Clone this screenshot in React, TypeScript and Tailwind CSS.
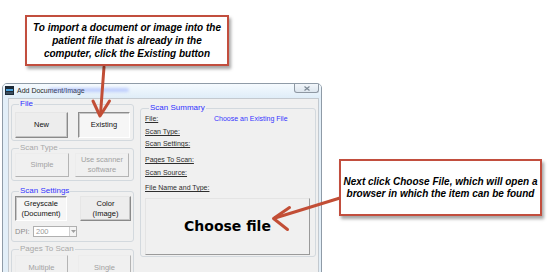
import React from "react";

function Btn({ cls, children, variant = "normal" }: { cls: string; children: React.ReactNode; variant?: "normal" | "pressed" | "disabled" }) {
  const v =
    variant === "pressed"
      ? "border border-t-[#8c8c8c] border-l-[#8c8c8c] border-r-[#ffffff] border-b-[#ffffff] bg-[#f6f6f6] text-[#111111] shadow-[inset_1px_1px_0_#c8c8c8]"
      : variant === "disabled"
      ? "border border-t-[#ececec] border-l-[#ececec] border-r-[#b4b4b4] border-b-[#b4b4b4] bg-[#f0f0f0] text-[#a2a2a2]"
      : "border border-t-[#e6e6e6] border-l-[#e6e6e6] border-r-[#8a8a8a] border-b-[#8a8a8a] bg-[#ededed] text-[#111111] shadow-[inset_-1px_-1px_0_#c4c4c4]";
  return (
    <div className={`${cls} ${v} flex items-center justify-center text-center text-[7.5px] leading-[10px]`}>
      {children}
    </div>
  );
}

function Group({ legend, color, cls, children }: { legend: string; color: string; cls: string; children: React.ReactNode }) {
  return (
    <fieldset className={`${cls} border border-[#d3d9de] rounded-[3px] min-w-0`}>
      <legend className={`ml-[4px] px-[1px] text-[8px] leading-[8px] ${color}`}>{legend}</legend>
      {children}
    </fieldset>
  );
}

export default function App() {
  const labels = [
    { t: "File:", mt: "mt-[2px]" },
    { t: "Scan Type:", mt: "mt-[4px]" },
    { t: "Scan Settings:", mt: "mt-[3px]" },
    { t: "Pages To Scan:", mt: "mt-[7px]" },
    { t: "Scan Source:", mt: "mt-[4px]" },
    { t: "File Name and Type:", mt: "mt-[6px]" },
  ];
  return (
    <div className="relative w-[556px] h-[272px] overflow-hidden bg-white font-['Liberation_Sans',Arial,sans-serif]">
      {/* Dialog window */}
      <div className="ml-[2px] mt-[83px] w-[320px] h-[200px] flex flex-col border border-[#8f9ba7] rounded-t-[5px] bg-[#e3eff8]">
        {/* title bar */}
        <div className="relative h-[14px] shrink-0 flex items-start bg-gradient-to-b from-[#f5fafe] to-[#dfedf8] rounded-t-[4px]">
          <svg className="ml-[2px] mt-[2px] shrink-0" width="9" height="9" viewBox="0 0 9 9">
            <rect x="0" y="0" width="9" height="9" fill="#1d2a36" />
            <rect x="1" y="3" width="7" height="2" fill="#4aa3e0" />
            <rect x="1" y="6" width="7" height="2" fill="#3a4d5e" />
          </svg>
          <span className="ml-[3px] mt-[3px] text-[7px] leading-[8px] text-[#1e1e1e] whitespace-nowrap">Add Document/Image</span>
          <div className="absolute left-[46px] top-[4px] w-[80px] h-[4px] rounded-full bg-[#7d95ff] opacity-40 blur-[1.5px]" />
          <div className="ml-auto mr-[2px] w-[25px] h-[9px] flex items-center justify-center border border-t-0 border-[#8e98a3] rounded-b-[3px] bg-gradient-to-b from-[#f2f6fa] to-[#dde6ee]">
            <svg width="6" height="5" viewBox="0 0 6 5">
              <path d="M0.5 0.5 L5.5 4.5 M5.5 0.5 L0.5 4.5" stroke="#7c8894" strokeWidth="1.2" />
            </svg>
          </div>
        </div>
        {/* client area */}
        <div className="ml-[5px] w-[311px] flex-1 flex border border-[#c3c9cf] bg-[#f0f0f0]">
          {/* left column */}
          <div className="w-[126px] pl-[2px] flex flex-col">
            <Group legend="File" color="text-[#2f2fff]" cls="mt-[1px] w-[123px] pt-[4px] pb-[2px] pl-[3px]">
              <div className="flex gap-[10px]">
                <Btn cls="w-[53px] h-[26px]">New</Btn>
                <Btn cls="w-[52px] h-[26px]" variant="pressed">Existing</Btn>
              </div>
            </Group>
            <Group legend="Scan Type" color="text-[#a8a8a8]" cls="mt-[3px] w-[123px] pt-[1px] pb-[3px] pl-[3px]">
              <div className="flex gap-[6px]">
                <Btn cls="w-[54px] h-[24px]" variant="disabled">Simple</Btn>
                <Btn cls="w-[54px] h-[24px]" variant="disabled">
                  Use scanner
                  <br />
                  software
                </Btn>
              </div>
            </Group>
            <Group legend="Scan Settings" color="text-[#3535ff]" cls="mt-[6px] w-[123px] pt-[1px] pb-[4px] pl-[3px]">
              <div className="flex gap-[13px]">
                <Btn cls="w-[52px] h-[25px]" variant="pressed">
                  Greyscale
                  <br />
                  (Document)
                </Btn>
                <Btn cls="w-[51px] h-[25px]">
                  Color
                  <br />
                  (Image)
                </Btn>
              </div>
              <div className="mt-[5px] flex items-center">
                <span className="text-[7.5px] leading-[10px] text-[#8c8c8c] w-[18px]">DPI:</span>
                <div className="w-[44px] h-[11px] flex items-center border border-[#b0b0b0] bg-white">
                  <span className="flex-1 pl-[2px] text-[7.5px] leading-[9px] text-[#9a9a9a]">200</span>
                  <div className="w-[7px] h-full flex items-center justify-center border-l border-[#d0d0d0] bg-[#f4f4f4]">
                    <svg width="5" height="3" viewBox="0 0 5 3">
                      <path d="M0 0 L5 0 L2.5 3 Z" fill="#a0a0a0" />
                    </svg>
                  </div>
                </div>
              </div>
            </Group>
            <Group legend="Pages To Scan" color="text-[#a8a8a8]" cls="mt-[3px] w-[123px] pt-[2px] pl-[3px]">
              <div className="flex gap-[10px]">
                <Btn cls="w-[53px] h-[25px]" variant="disabled">Multiple</Btn>
                <Btn cls="w-[53px] h-[25px]" variant="disabled">Single</Btn>
              </div>
            </Group>
          </div>
          {/* right column */}
          <div className="pl-[5px] flex flex-col">
            <Group legend="Scan Summary" color="text-[#3030ff]" cls="mt-[5px] w-[176px] pl-[4px] pb-[1px]">
              {labels.map((l, i) => (
                <div key={l.t} className={`${l.mt} h-[9px] flex items-center text-[7px] leading-[9px]`}>
                  <span className="w-[69px] underline text-[#2e2e2e] whitespace-nowrap">{l.t}</span>
                  {i === 0 && <span className="text-[#3535ff] whitespace-nowrap">Choose an Existing File</span>}
                </div>
              ))}
              <div className="mt-[6px] w-[165px] h-[57px] flex items-center justify-center border border-t-[#e4e4e4] border-l-[#e4e4e4] border-r-[#9a9a9a] border-b-[#9a9a9a] bg-[#f0f0f0]">
                <span className="font-['DejaVu_Sans',sans-serif] font-bold text-[14px] text-black">Choose file</span>
              </div>
            </Group>
          </div>
        </div>
      </div>

      {/* Arrows */}
      <svg className="absolute inset-0 z-10 pointer-events-none" width="556" height="272" viewBox="0 0 556 272">
        <g stroke="#c24e36" strokeWidth="3" fill="none" strokeLinecap="round" strokeLinejoin="round">
          <path d="M104 67 L100.5 114" />
          <path d="M93 101 L100 116 L109.5 101" />
          <path d="M340 198 L275 218" />
          <path d="M289.5 207.5 L273.5 218.5 L287.5 229.5" />
        </g>
      </svg>

      {/* Callout 1 */}
      <div className="absolute left-[25px] top-[15px] z-20 w-[204px] h-[51px] flex items-center justify-center border-2 border-[#c24e3e] bg-white shadow-[2px_3px_3px_rgba(0,0,0,0.35)]">
        <p className="text-center font-bold italic text-[10px] leading-[13px] text-black">
          To import a document or image into the
          <br />
          patient file that is already in the
          <br />
          computer, click the Existing button
        </p>
      </div>

      {/* Callout 2 */}
      <div className="absolute left-[339px] top-[159px] z-20 w-[203px] h-[57px] flex items-center justify-center border-2 border-[#c24e3e] bg-white shadow-[2px_3px_3px_rgba(0,0,0,0.35)]">
        <p className="text-center font-bold italic text-[10px] leading-[12px] text-black">
          Next click Choose File, which will open a
          <br />
          browser in which the item can be found
        </p>
      </div>
    </div>
  );
}
